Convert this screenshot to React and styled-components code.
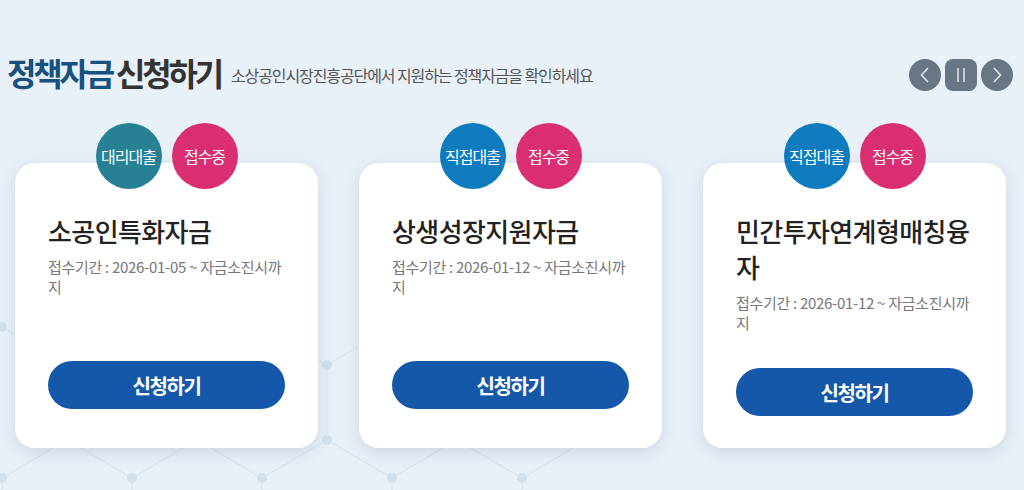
import React from 'react'
import styled, { createGlobalStyle } from 'styled-components'

const GlobalStyle = createGlobalStyle`
  html, body {
    margin: 0;
    padding: 0;
    background: #e8f0f8;
    overflow: hidden;
  }
  * {
    box-sizing: border-box;
  }
`;

const Section = styled.div`
  position: relative;
  width: 1024px;
  height: 490px;
  overflow: hidden;
  font-family: "Noto Sans CJK KR", "Noto Sans", sans-serif;
  background: #e8f0f8;
`;

const Network = styled.svg`
  position: absolute;
  left: 0;
  top: 0;
  z-index: 0;
`;

const Header = styled.div`
  position: relative;
  z-index: 1;
  display: flex;
  align-items: center;
  padding: 53px 11px 0 7px;
`;

const Title = styled.h2`
  margin: 0;
  font-size: 32px;
  font-weight: 700;
  letter-spacing: -3.2px;
  line-height: 38px;
  color: #333;

  span {
    color: #17517f;
  }
`;

const Subtitle = styled.p`
  margin: 6px 0 0 10px;
  font-size: 16px;
  letter-spacing: -1.1px;
  color: #555;
`;

const Nav = styled.div`
  display: flex;
  gap: 4px;
  margin-left: auto;
  margin-top: 6px;
`;

const NavButton = styled.button`
  width: 32px;
  height: 32px;
  padding: 0;
  border: none;
  border-radius: ${p => (p.$square ? '8px' : '50%')};
  background: #687582;
  display: flex;
  align-items: center;
  justify-content: center;
  cursor: pointer;
`;

const CardRow = styled.div`
  position: relative;
  z-index: 1;
  display: flex;
  gap: 41px;
  padding: 32px 0 0 15px;
`;

const CardWrap = styled.div`
  display: flex;
  flex-direction: column;
  width: 303px;
`;

const BadgeRow = styled.div`
  position: relative;
  z-index: 2;
  display: flex;
  justify-content: center;
  gap: 10px;
`;

const Badge = styled.div`
  width: 66px;
  height: 66px;
  border-radius: 50%;
  background: ${p => p.$color};
  color: #fff;
  font-size: 16px;
  letter-spacing: -1px;
  display: flex;
  align-items: center;
  justify-content: center;
`;

const Card = styled.div`
  margin-top: -26px;
  height: 285px;
  padding: 50px 33px 0;
  background: #fff;
  border-radius: 20px;
  box-shadow: 0 4px 16px rgba(60, 80, 100, 0.16);
  display: flex;
  flex-direction: column;
`;

const Info = styled.div`
  min-height: 113px;
`;

const CardTitle = styled.h3`
  margin: 0;
  font-size: 26px;
  font-weight: 500;
  line-height: 36px;
  letter-spacing: -0.6px;
  color: #222;
`;

const Period = styled.p`
  margin: 8px 0 0;
  font-size: 15px;
  line-height: 20px;
  letter-spacing: -0.3px;
  color: #777;
`;

const ApplyButton = styled.button`
  margin-top: 35px;
  width: 100%;
  height: 48px;
  border: none;
  border-radius: 24px;
  background: #1557a8;
  color: #fff;
  font-family: inherit;
  font-size: 20px;
  font-weight: 700;
  letter-spacing: -1.4px;
  cursor: pointer;
`;

const cards = [
  { kind: '대리대출', color: '#288094', title: '소공인특화자금', date: '2026-01-05' },
  { kind: '직접대출', color: '#0f7bbf', title: '상생성장지원자금', date: '2026-01-12' },
  { kind: '직접대출', color: '#0f7bbf', title: '민간투자연계형매칭융자', date: '2026-01-12' },
];

// faint hexagon lattice behind the cards
const STEP = 130;
const lattice = () => {
  const lines = [];
  const dots = [];
  for (let k = 0; k < 5; k++) {
    const a = 2 + k * STEP;
    const b = a + STEP / 2;
    dots.push([a, 478], [a, 327], [b, 440], [b, 365]);
    lines.push([a, 478, a, 500], [a, 478, b, 440], [a, 327, b, 365], [b, 440, b, 365]);
    if (k > 0) lines.push([a, 478, a - STEP / 2, 440], [a, 327, a - STEP / 2, 365]);
  }
  return { lines, dots };
};
const { lines, dots } = lattice();

const App = () => {
  return (
    <Section>
      <GlobalStyle />
      <Network width="640" height="490">
        <g strokeWidth="1.2" fill="none">
          {lines.map(([x1, y1, x2, y2], i) => (
            <line key={i} x1={x1} y1={y1} x2={x2} y2={y2} stroke="#d8e4ee" />
          ))}
        </g>
        {dots.map(([x, y], i) => (
          <circle key={i} cx={x} cy={y} r="5" fill="#d2e0eb" />
        ))}
      </Network>
      <Header>
        <Title><span>정책자금</span> 신청하기</Title>
        <Subtitle>소상공인시장진흥공단에서 지원하는 정책자금을 확인하세요</Subtitle>
        <Nav>
          <NavButton aria-label="이전">
            <svg width="14" height="20" viewBox="0 0 14 20">
              <path d="M10 3 L3.5 10 L10 17" fill="none" stroke="#dfe4e8" strokeWidth="1.6" />
            </svg>
          </NavButton>
          <NavButton $square aria-label="정지">
            <svg width="14" height="20" viewBox="0 0 14 20">
              <path d="M4 3 V17 M10 3 V17" fill="none" stroke="#dfe4e8" strokeWidth="1.6" />
            </svg>
          </NavButton>
          <NavButton aria-label="다음">
            <svg width="14" height="20" viewBox="0 0 14 20">
              <path d="M4 3 L10.5 10 L4 17" fill="none" stroke="#dfe4e8" strokeWidth="1.6" />
            </svg>
          </NavButton>
        </Nav>
      </Header>
      <CardRow>
        {cards.map((c, i) => (
          <CardWrap key={i}>
            <BadgeRow>
              <Badge $color={c.color}>{c.kind}</Badge>
              <Badge $color="#d92f72">접수중</Badge>
            </BadgeRow>
            <Card>
              <Info>
                <CardTitle>{c.title}</CardTitle>
                <Period>{`접수기간 : ${c.date} ~ 자금소진시까지`}</Period>
              </Info>
              <ApplyButton>신청하기</ApplyButton>
            </Card>
          </CardWrap>
        ))}
      </CardRow>
    </Section>
  )
}

export default App;
